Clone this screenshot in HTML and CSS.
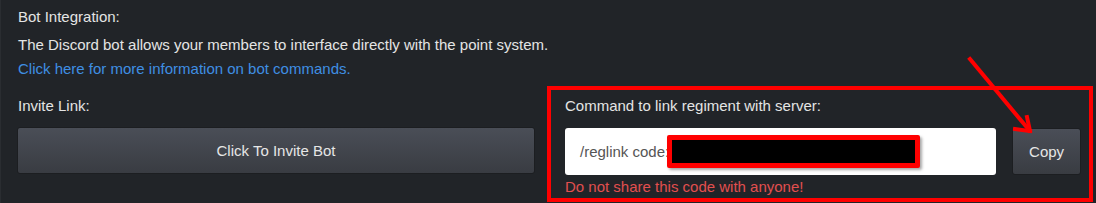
FILE: index.html
```html
<!DOCTYPE html>
<html>
<head>
<meta charset="utf-8">
<link rel="stylesheet" href="styles.css">
</head>
<body>
<div class="panel">
  <div class="title">Bot Integration:</div>
  <div class="desc">
    <div>The Discord bot allows your members to interface directly with the point system.</div>
    <a class="link" href="#">Click here for more information on bot commands.</a>
  </div>
  <div class="row">
    <div class="invite">
      <div class="label">Invite Link:</div>
      <button class="btn btn-wide">Click To Invite Bot</button>
    </div>
    <div class="command">
      <div class="label">Command to link regiment with server:</div>
      <div class="cmd-row">
        <div class="input">/reglink code:<span class="redact"></span></div>
        <button class="btn btn-copy">Copy</button>
      </div>
      <div class="warn">Do not share this code with anyone!</div>
    </div>
  </div>
  <svg class="arrow" width="1096" height="203" viewBox="0 0 1096 203">
    <g stroke="#ff0000" stroke-width="4" stroke-linecap="square" fill="none">
      <line x1="970" y1="59" x2="1029" y2="130"/>
      <line x1="1030" y1="131" x2="1027" y2="117"/>
      <line x1="1030" y1="131" x2="1015" y2="129"/>
    </g>
  </svg>
</div>
</body>
</html>
```

FILE: styles.css
```css
html, body {
  margin: 0;
  padding: 0;
  background: #212428;
}
body {
  font-family: "Liberation Sans", Arial, sans-serif;
  font-size: 15px;
  color: #e4e4e4;
}
.panel {
  position: relative;
  width: 1096px;
  height: 203px;
  box-sizing: border-box;
  padding: 7px 0 0 17px;
  border-left: 1px solid #2a2d31;
  overflow: hidden;
}
.title {
  line-height: 20px;
  height: 20px;
}
.desc {
  margin-top: 6px;
  line-height: 24px;
}
.link {
  color: #3f8fe3;
  text-decoration: none;
}
.row {
  display: flex;
  margin-top: 5px;
}
.invite {
  width: 517px;
  margin-right: 13px;
  padding-top: 10px;
}
.label {
  line-height: 20px;
  height: 20px;
}
.btn {
  font-family: "Liberation Sans", Arial, sans-serif;
  font-size: 15px;
  color: #e6e6e6;
  background: linear-gradient(#4a4e57, #393c42);
  border: 1px solid #1c1e21;
  border-radius: 3px;
  padding: 0;
  cursor: pointer;
}
.btn-wide {
  display: block;
  width: 518px;
  height: 47px;
  margin-top: 11px;
  margin-left: -1px;
}
.command {
  width: 546px;
  box-sizing: border-box;
  border: 4px solid #ff0000;
  padding: 6px 8px 1px 14px;
  margin-left: -1px;
}
.cmd-row {
  display: flex;
  align-items: center;
  margin-top: 11px;
}
.input {
  width: 432px;
  height: 47px;
  box-sizing: border-box;
  background: #ffffff;
  border-radius: 3px;
  padding-left: 15px;
  color: #555555;
  line-height: 47px;
  white-space: nowrap;
}
.redact {
  display: inline-block;
  vertical-align: middle;
  width: 253px;
  height: 33px;
  box-sizing: border-box;
  margin-left: -2px;
  margin-top: -3px;
  border: 5px solid #ff0000;
  border-radius: 2px;
  background: #000000;
  box-shadow: 2px 2px 3px rgba(0, 0, 0, 0.35);
}
.btn-copy {
  width: 69px;
  height: 47px;
  margin-left: 16px;
  margin-top: 1px;
}
.warn {
  margin-top: 2px;
  line-height: 20px;
  height: 20px;
  color: #e24f4f;
}
.arrow {
  position: absolute;
  left: -1px;
  top: 0;
  pointer-events: none;
}
```
